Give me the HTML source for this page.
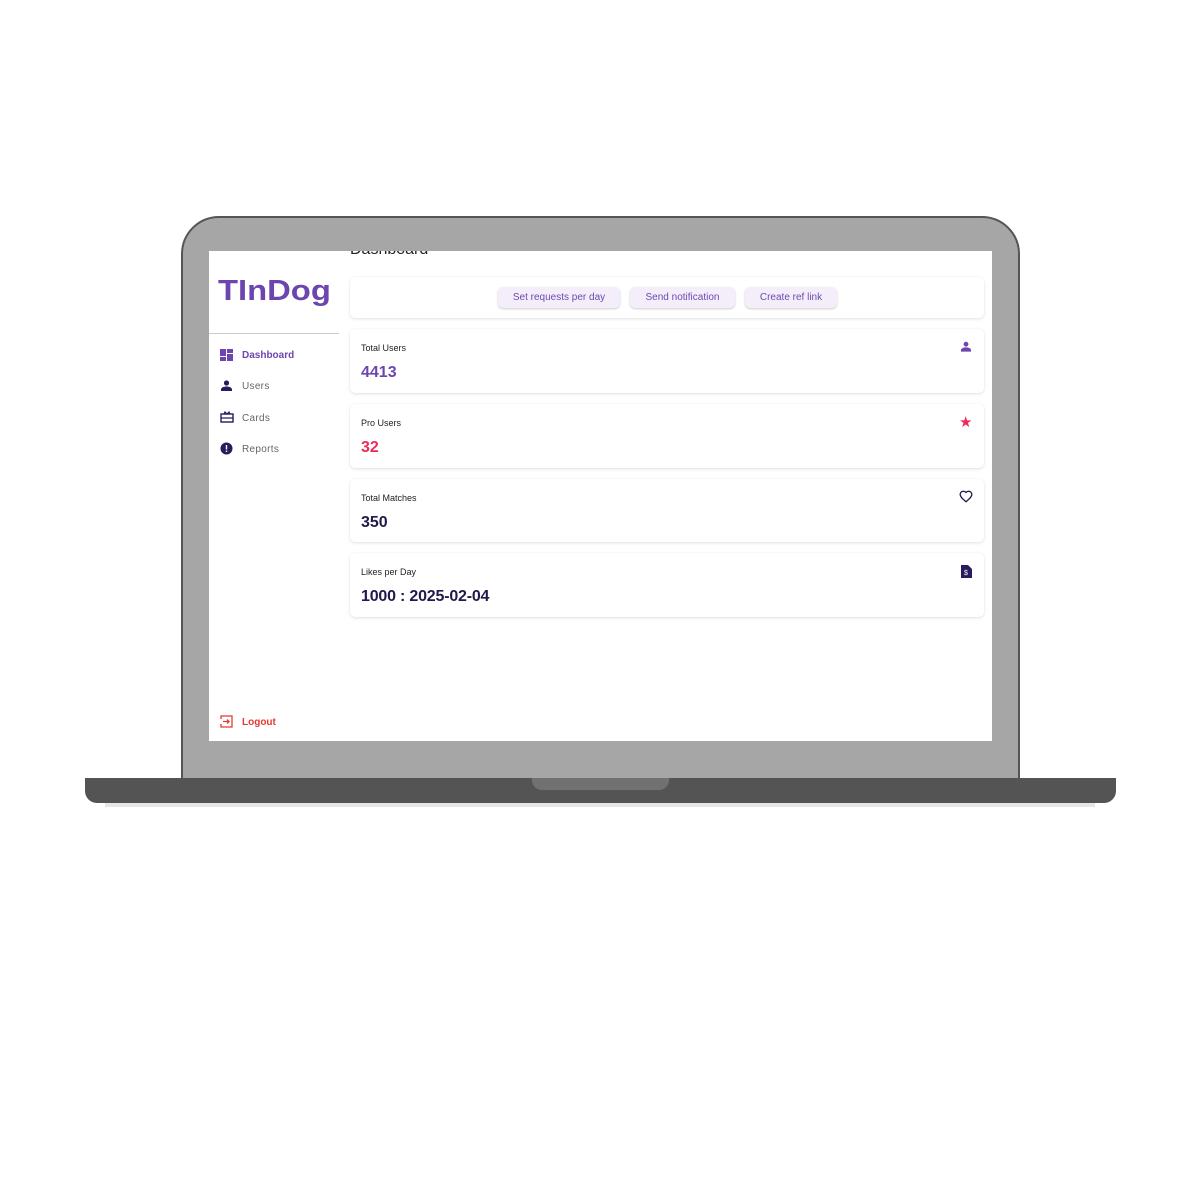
<!DOCTYPE html>
<html><head><style>
*{margin:0;padding:0;box-sizing:border-box}
body{width:1200px;height:1200px;background:#fff;position:relative;font-family:"Liberation Sans",Arial,sans-serif;overflow:hidden}
.abs{position:absolute}
.body{left:181px;top:216px;width:839px;height:572px;background:#a6a6a6;border:2px solid #555;border-radius:38px 38px 0 0}
.screen{left:209px;top:251px;width:783px;height:490px;background:#fff;overflow:hidden}
.base{left:85px;top:778px;width:1031px;height:25px;background:#545454;border-radius:0 0 12px 12px}
.notch{left:532px;top:778px;width:137px;height:12px;background:#717171;border-radius:0 0 10px 10px}
.shadow{left:105px;top:803px;width:990px;height:4px;background:#e6e6e6}
.card{position:absolute;left:141px;width:634px;background:#fff;border-radius:5px;box-shadow:0 1px 3px rgba(0,0,0,.12),0 0 1px rgba(0,0,0,.06)}
.lbl{position:absolute;left:11px;top:14px;font-size:9px;color:#222}
.val{position:absolute;left:11px;top:35px;font-size:16px;font-weight:bold}
.btn{position:absolute;top:10px;height:21px;background:#f3eefa;border-radius:5px;box-shadow:0 1px 2px rgba(0,0,0,.2);font-size:10px;color:#6c4ab0;line-height:22px;text-align:center}
.nav{position:absolute;left:33px;font-size:10px;color:#666;letter-spacing:.3px}
.ic{position:absolute;left:11px}
</style></head><body>
<div class="abs body"></div>
<div class="abs base"></div>
<div class="abs notch"></div>
<div class="abs shadow"></div>
<div class="abs screen">
  <div class="abs" style="left:141px;top:-10px;font-size:16px;color:#222">Dashboard</div>
  <div class="abs" style="left:9px;top:24px;font-size:29px;font-weight:bold;color:#6c46ae;transform:scaleX(1.13);transform-origin:left top">TInDog</div>
  <div class="abs" style="left:0;top:82px;width:130px;height:1px;background:#ccc"></div>
  <svg class="ic" style="top:98px" width="13" height="12" viewBox="0 0 13 12"><rect x="0" y="0" width="6" height="7" fill="#6c46ae"/><rect x="7" y="0" width="6" height="4" fill="#6c46ae"/><rect x="0" y="8" width="6" height="4" fill="#6c46ae"/><rect x="7" y="5" width="6" height="7" fill="#6c46ae"/></svg>
  <div class="nav" style="top:99px;color:#6c46ae;font-weight:bold;letter-spacing:0">Dashboard</div>
  <svg class="ic" style="top:129px" width="13" height="11" viewBox="0 0 13 11"><circle cx="6.5" cy="3" r="2.6" fill="#2a1a5e"/><path d="M1 11v-1.5c0-2 3-3 5.5-3s5.5 1 5.5 3V11z" fill="#2a1a5e"/></svg>
  <div class="nav" style="top:130px">Users</div>
  <svg class="ic" style="top:160px" width="14" height="12" viewBox="0 0 14 12"><rect x="1" y="3" width="12" height="8" fill="none" stroke="#2a1a5e" stroke-width="1.4"/><path d="M1 7h12M4 3l1-2 2 2 2-2 1 2" stroke="#2a1a5e" stroke-width="1.2" fill="none"/></svg>
  <div class="nav" style="top:162px">Cards</div>
  <svg class="ic" style="top:191px" width="13" height="13" viewBox="0 0 13 13"><circle cx="6.5" cy="6.5" r="6" fill="#2a1a5e"/><rect x="5.8" y="3" width="1.4" height="4.5" fill="#fff"/><rect x="5.8" y="8.6" width="1.4" height="1.4" fill="#fff"/></svg>
  <div class="nav" style="top:193px">Reports</div>
  <svg class="ic" style="top:464px" width="13" height="13" viewBox="0 0 13 13"><path d="M1 4V1h11v11H1V9" stroke="#e53935" stroke-width="1.3" fill="none"/><path d="M3 6.5h6M7 4.5l2 2-2 2" stroke="#e53935" stroke-width="1.3" fill="none"/></svg>
  <div class="nav" style="top:466px;color:#e53935;font-weight:bold;letter-spacing:0">Logout</div>

  <div class="card" style="top:26px;height:41px">
    <div class="btn" style="left:148px;width:122px">Set requests per day</div>
    <div class="btn" style="left:280px;width:105px">Send notification</div>
    <div class="btn" style="left:395px;width:92px">Create ref link</div>
  </div>
  <div class="card" style="top:78px;height:64px"><div class="lbl">Total Users</div><div class="val" style="color:#6c46ae">4413</div>
    <svg class="abs" style="left:610px;top:12px" width="12" height="11" viewBox="0 0 13 11"><circle cx="6.5" cy="3" r="2.6" fill="#6c46ae"/><path d="M1 11v-1.5c0-2 3-3 5.5-3s5.5 1 5.5 3V11z" fill="#6c46ae"/></svg></div>
  <div class="card" style="top:153px;height:64px"><div class="lbl">Pro Users</div><div class="val" style="color:#ee2a5a">32</div>
    <div class="abs" style="left:609px;top:9px;font-size:15px;color:#ee2a5a">★</div></div>
  <div class="card" style="top:228px;height:63px"><div class="lbl">Total Matches</div><div class="val" style="color:#1f1a4a">350</div>
    <svg class="abs" style="left:609px;top:11px" width="14" height="13" viewBox="0 0 24 22"><path d="M12 20l-1.5-1.3C5 14 2 11 2 7.5 2 4.5 4.4 2 7.5 2c1.7 0 3.4.8 4.5 2.1C13.1 2.8 14.8 2 16.5 2 19.6 2 22 4.5 22 7.5c0 3.5-3 6.5-8.5 11.2z" fill="none" stroke="#1f1a4a" stroke-width="2.2"/></svg></div>
  <div class="card" style="top:302px;height:64px"><div class="lbl">Likes per Day</div><div class="val" style="color:#1f1a4a;letter-spacing:-.2px">1000 : 2025-02-04</div>
    <svg class="abs" style="left:611px;top:11px" width="11" height="14" viewBox="0 0 11 14"><path d="M0 1h7l4 4v9H0z" fill="#2a1a5e"/><text x="3" y="11" font-size="7" fill="#fff" font-family="Liberation Sans">$</text></svg></div>
</div>
</body></html>
